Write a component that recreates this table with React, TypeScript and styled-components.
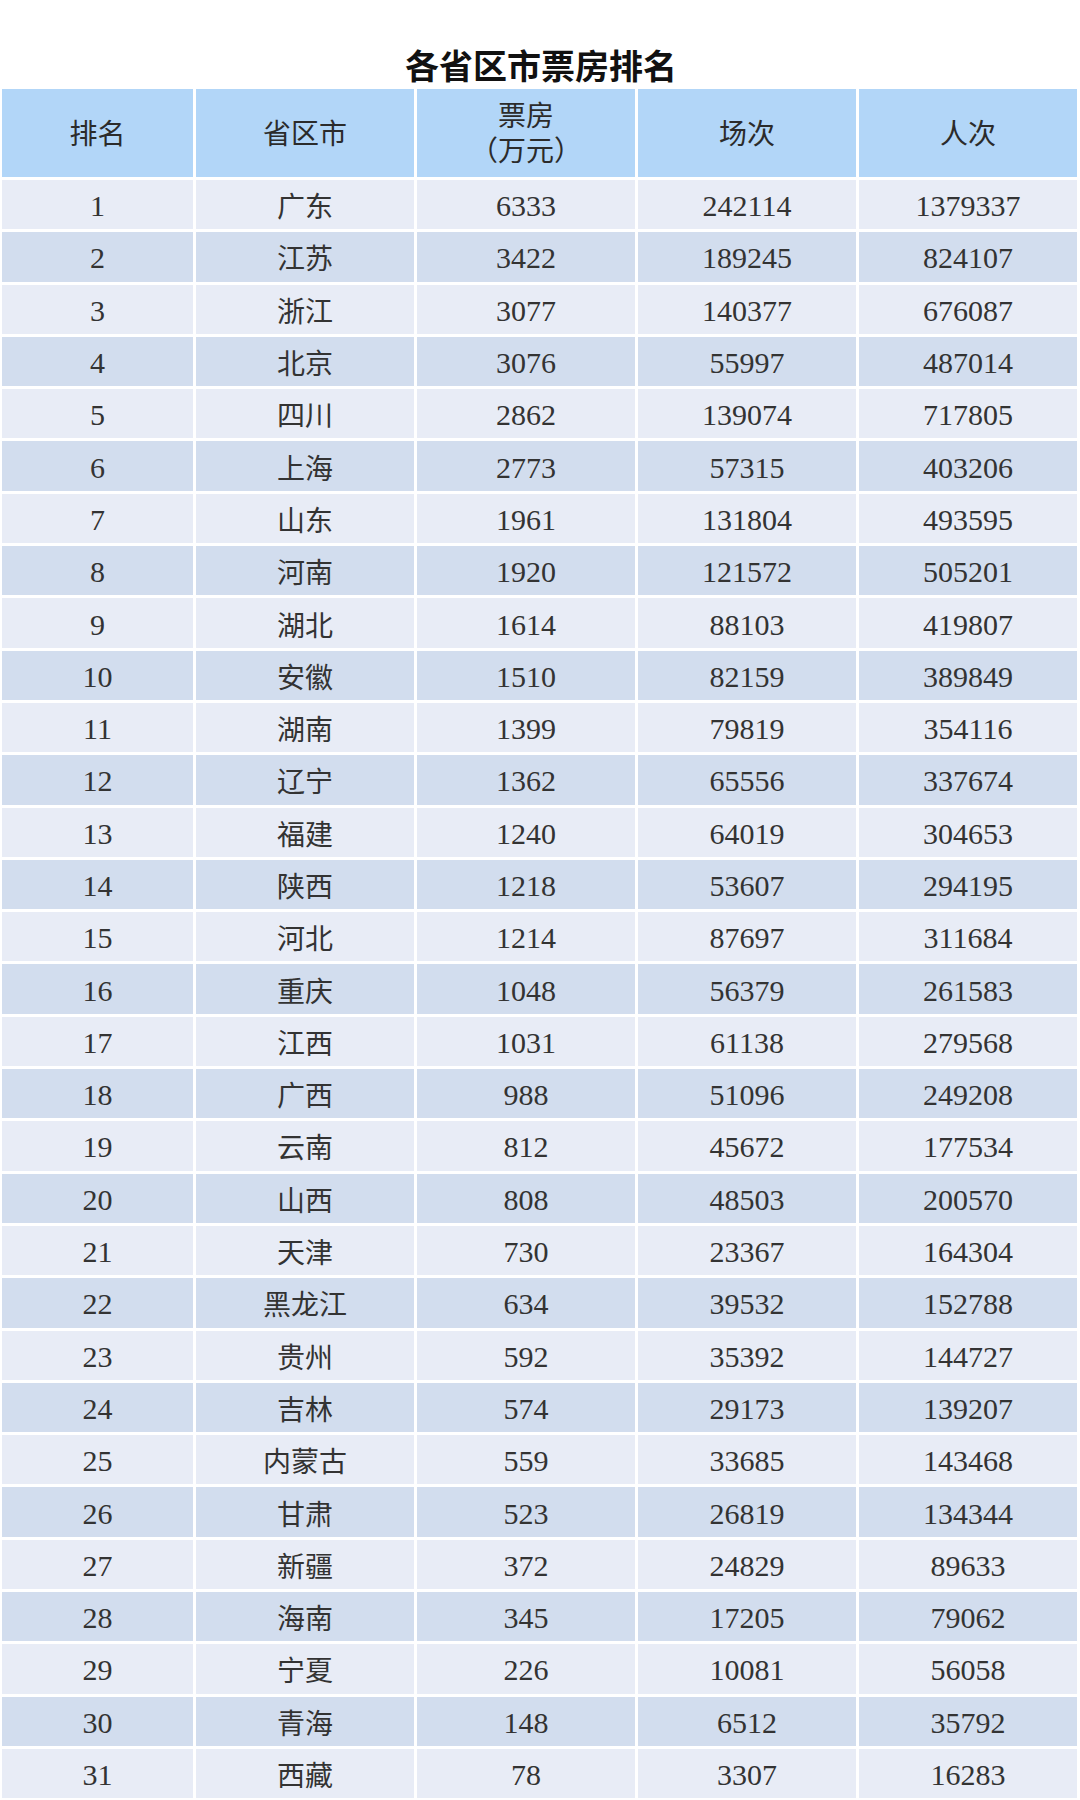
import React from 'react';
import styled, { createGlobalStyle } from 'styled-components';

const GlobalStyle = createGlobalStyle`
  html, body {
    margin: 0;
    padding: 0;
    background: #ffffff;
  }
  body {
    width: 1080px;
    font-family: "Liberation Serif", "Noto Sans CJK SC", serif;
  }
`;

interface Row {
  rank: number;
  name: string;
  box: number;
  shows: number;
  people: number;
}

const rows: Row[] = [
  { rank: 1, name: '广东', box: 6333, shows: 242114, people: 1379337 },
  { rank: 2, name: '江苏', box: 3422, shows: 189245, people: 824107 },
  { rank: 3, name: '浙江', box: 3077, shows: 140377, people: 676087 },
  { rank: 4, name: '北京', box: 3076, shows: 55997, people: 487014 },
  { rank: 5, name: '四川', box: 2862, shows: 139074, people: 717805 },
  { rank: 6, name: '上海', box: 2773, shows: 57315, people: 403206 },
  { rank: 7, name: '山东', box: 1961, shows: 131804, people: 493595 },
  { rank: 8, name: '河南', box: 1920, shows: 121572, people: 505201 },
  { rank: 9, name: '湖北', box: 1614, shows: 88103, people: 419807 },
  { rank: 10, name: '安徽', box: 1510, shows: 82159, people: 389849 },
  { rank: 11, name: '湖南', box: 1399, shows: 79819, people: 354116 },
  { rank: 12, name: '辽宁', box: 1362, shows: 65556, people: 337674 },
  { rank: 13, name: '福建', box: 1240, shows: 64019, people: 304653 },
  { rank: 14, name: '陕西', box: 1218, shows: 53607, people: 294195 },
  { rank: 15, name: '河北', box: 1214, shows: 87697, people: 311684 },
  { rank: 16, name: '重庆', box: 1048, shows: 56379, people: 261583 },
  { rank: 17, name: '江西', box: 1031, shows: 61138, people: 279568 },
  { rank: 18, name: '广西', box: 988, shows: 51096, people: 249208 },
  { rank: 19, name: '云南', box: 812, shows: 45672, people: 177534 },
  { rank: 20, name: '山西', box: 808, shows: 48503, people: 200570 },
  { rank: 21, name: '天津', box: 730, shows: 23367, people: 164304 },
  { rank: 22, name: '黑龙江', box: 634, shows: 39532, people: 152788 },
  { rank: 23, name: '贵州', box: 592, shows: 35392, people: 144727 },
  { rank: 24, name: '吉林', box: 574, shows: 29173, people: 139207 },
  { rank: 25, name: '内蒙古', box: 559, shows: 33685, people: 143468 },
  { rank: 26, name: '甘肃', box: 523, shows: 26819, people: 134344 },
  { rank: 27, name: '新疆', box: 372, shows: 24829, people: 89633 },
  { rank: 28, name: '海南', box: 345, shows: 17205, people: 79062 },
  { rank: 29, name: '宁夏', box: 226, shows: 10081, people: 56058 },
  { rank: 30, name: '青海', box: 148, shows: 6512, people: 35792 },
  { rank: 31, name: '西藏', box: 78, shows: 3307, people: 16283 },
];

const Page = styled.div`
  width: 1080px;
  padding-left: 2px;
  box-sizing: border-box;
`;

const Title = styled.h1`
  margin: 0;
  height: 89px;
  box-sizing: border-box;
  padding-top: 47px;
  text-align: center;
  font-family: "Noto Sans CJK SC", sans-serif;
  font-weight: 700;
  font-size: 34px;
  line-height: 36px;
  color: #111111;
`;

const Table = styled.div`
  display: grid;
  grid-template-columns: 191px repeat(4, 218px);
  grid-template-rows: 88px;
  grid-auto-rows: 49.3px;
  gap: 3px;
  background: #ffffff;
`;

const HeadCell = styled.div`
  display: flex;
  flex-direction: column;
  align-items: center;
  justify-content: center;
  background: #b2d6f8;
  color: #2b2b2b;
  font-size: 28px;
  line-height: 35px;
  padding-top: 2px;
  box-sizing: border-box;
`;

const Cell = styled.div<{ $even: boolean; $cjk?: boolean }>`
  display: flex;
  align-items: center;
  justify-content: center;
  background: ${(p) => (p.$even ? '#d2ddee' : '#e8ecf6')};
  color: #333333;
  font-size: ${(p) => (p.$cjk ? '28px' : '30px')};
  line-height: 1;
  padding-top: ${(p) => (p.$cjk ? '7px' : '3px')};
  box-sizing: border-box;
`;

const App: React.FC = () => {
  return (
    <Page>
      <GlobalStyle />
      <Title>各省区市票房排名</Title>
      <Table>
        <HeadCell>排名</HeadCell>
        <HeadCell>省区市</HeadCell>
        <HeadCell>
          <span>票房</span>
          <span>（万元）</span>
        </HeadCell>
        <HeadCell>场次</HeadCell>
        <HeadCell>人次</HeadCell>
        {rows.map((r) => {
          const even = r.rank % 2 === 0;
          return (
            <React.Fragment key={r.rank}>
              <Cell $even={even}>{r.rank}</Cell>
              <Cell $even={even} $cjk>{r.name}</Cell>
              <Cell $even={even}>{r.box}</Cell>
              <Cell $even={even}>{r.shows}</Cell>
              <Cell $even={even}>{r.people}</Cell>
            </React.Fragment>
          );
        })}
      </Table>
    </Page>
  );
};

export default App;
